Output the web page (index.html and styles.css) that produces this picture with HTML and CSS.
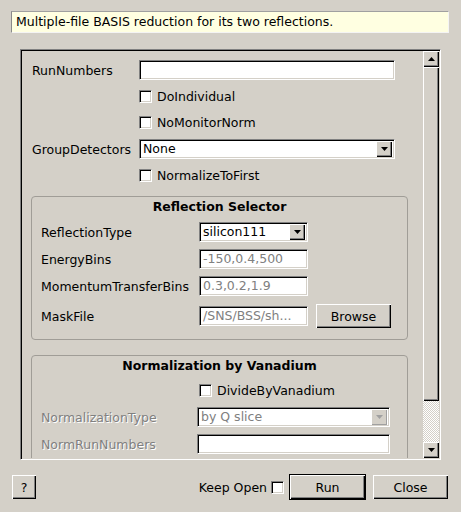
FILE: index.html
```html
<!DOCTYPE html>
<html>
<head>
<meta charset="utf-8">
<link rel="stylesheet" href="styles.css">
</head>
<body>
<div class="dialog">
  <div class="banner">Multiple-file BASIS reduction for its two reflections.</div>
  <div class="scroll">
    <div class="viewport">
      <div class="form">
        <div class="lbl">RunNumbers</div>
        <div class="field"><div class="input w256"></div></div>
        <div></div>
        <div class="field"><span class="check"></span><span class="cl">DoIndividual</span></div>
        <div></div>
        <div class="field"><span class="check"></span><span class="cl">NoMonitorNorm</span></div>
        <div class="lbl">GroupDetectors</div>
        <div class="field"><div class="combo w256"><span class="ctext">None</span><span class="cbtn"><svg width="7" height="4" viewBox="0 0 7 4"><polygon points="0,0 7,0 3.5,4" fill="#000"/></svg></span></div></div>
        <div></div>
        <div class="field"><span class="check"></span><span class="cl">NormalizeToFirst</span></div>
      </div>

      <div class="group g1">
        <div class="gtitle">Reflection Selector</div>
        <div class="grows">
          <div class="lbl">ReflectionType</div>
          <div class="field"><div class="combo w109"><span class="ctext">silicon111</span><span class="cbtn"><svg width="7" height="4" viewBox="0 0 7 4"><polygon points="0,0 7,0 3.5,4" fill="#000"/></svg></span></div></div>
          <div class="lbl">EnergyBins</div>
          <div class="field"><div class="input w109 ph">-150,0.4,500</div></div>
          <div class="lbl">MomentumTransferBins</div>
          <div class="field"><div class="input w109 ph">0.3,0.2,1.9</div></div>
          <div class="lbl last">MaskFile</div>
          <div class="field tall last"><div class="input w109 ph">/SNS/BSS/sh...</div><button class="btn browse">Browse</button></div>
        </div>
      </div>

      <div class="group g2">
        <div class="gtitle">Normalization by Vanadium</div>
        <div class="grows2">
          <div></div>
          <div class="field"><span class="check ml2"></span><span class="cl">DivideByVanadium</span></div>
          <div class="lbl dis">NormalizationType</div>
          <div class="field"><div class="combo w193 disabled"><span class="ctext ph">by Q slice</span><span class="cbtn"><svg width="7" height="4" viewBox="0 0 7 4"><polygon points="0,0 7,0 3.5,4" fill="#a0a0a0"/></svg></span></div></div>
          <div class="lbl dis">NormRunNumbers</div>
          <div class="field"><div class="input w193"></div></div>
        </div>
      </div>
    </div>
    <div class="vscroll">
      <div class="sbbtn"><svg width="7" height="4" viewBox="0 0 7 4"><polygon points="3.5,0 7,4 0,4" fill="#000"/></svg></div>
      <div class="thumb"></div>
      <div class="track"></div>
      <div class="sbbtn"><svg width="7" height="4" viewBox="0 0 7 4"><polygon points="0,0 7,0 3.5,4" fill="#000"/></svg></div>
    </div>
  </div>
  <div class="footer">
    <button class="btn help">?</button>
    <div class="spacer"></div>
    <span class="keep">Keep Open</span>
    <span class="check keepbox"></span>
    <button class="btn run">Run</button>
    <button class="btn close">Close</button>
  </div>
</div>
</body>
</html>
```

FILE: styles.css
```css
html, body {
  margin: 0;
  padding: 0;
}
body {
  width: 461px;
  height: 512px;
  overflow: hidden;
  background: #d4d0c8;
  font-family: "DejaVu Sans", sans-serif;
  font-size: 12.5px;
  color: #000;
}
.dialog {
  display: flex;
  flex-direction: column;
  height: 512px;
}
.banner {
  margin: 11px 12px 0 11px;
  height: 22px;
  box-sizing: border-box;
  background: #ffffe1;
  border: 1px solid;
  border-color: #a0a0a0 #f4f4f4 #f4f4f4 #8a8a8a;
  padding-left: 4px;
  line-height: 20px;
  white-space: nowrap;
}
.scroll {
  margin: 16px 20px 0 20px;
  height: 411px;
  box-sizing: border-box;
  border: 1px solid;
  border-color: #808080 #fff #fff #808080;
  box-shadow: inset 1px 1px 0 #000, inset -1px -1px 0 #d4d0c8;
  padding: 1px;
  display: flex;
}
.viewport {
  flex: 1;
  overflow: hidden;
  position: relative;
}
.vscroll {
  width: 16px;
  display: flex;
  flex-direction: column;
}
.sbbtn, .thumb, .btn, .cbtn {
  background: #d4d0c8;
  box-shadow: inset 1px 1px 0 #fff, inset -1px -1px 0 #000, inset -2px -2px 0 #808080;
}
.sbbtn {
  height: 16px;
  display: flex;
  align-items: center;
  justify-content: center;
}
.thumb {
  height: 334px;
}
.track {
  flex: 1;
  background: repeating-conic-gradient(#ffffff 0 25%, #d4d0c8 0 50%);
  background-size: 2px 2px;
}

/* form */
.form {
  display: grid;
  grid-template-columns: 107px 256px;
  grid-template-rows: 20px 20px 21px 20px 20px;
  row-gap: 6px;
  align-items: center;
  padding: 9px 0 0 10px;
}
.lbl {
  white-space: nowrap;
}
.lbl.dis {
  color: #808080;
  text-shadow: 1px 1px 0 #fff;
}
.field {
  display: flex;
  align-items: center;
  height: 20px;
}
.field.tall {
  height: 24px;
}
.last {
  margin-top: 1px;
}
.input, .combo {
  height: 20px;
  box-sizing: border-box;
  background: #fff;
  border: 1px solid;
  border-color: #808080 #fff #fff #808080;
  box-shadow: inset 1px 1px 0 #000, inset -1px -1px 0 #d4d0c8;
  padding: 0 3px;
  line-height: 18px;
  white-space: nowrap;
  overflow: hidden;
}
.ph {
  color: #808080;
}
.w256 { width: 256px; }
.w109 { width: 109px; }
.w193 { width: 193px; }
.combo {
  display: flex;
  padding: 1px 2px 1px 3px;
}
.ctext {
  flex: 1;
  line-height: 16px;
  overflow: hidden;
}
.cbtn {
  width: 16px;
  height: 16px;
  display: flex;
  align-items: center;
  justify-content: center;
}
.combo.disabled .cbtn {
  box-shadow: inset 1px 1px 0 #fff, inset -1px -1px 0 #a0a0a0;
}
.check {
  width: 13px;
  height: 13px;
  box-sizing: border-box;
  background: #fff;
  border: 1px solid;
  border-color: #808080 #fff #fff #808080;
  box-shadow: inset 1px 1px 0 #000, inset -1px -1px 0 #d4d0c8;
  flex: none;
}
.ml2 { margin-left: 2px; }
.cl {
  margin-left: 5px;
  white-space: nowrap;
}

/* groups */
.group {
  margin-left: 9px;
  width: 377px;
  box-sizing: border-box;
  border: 1px solid #a09d97;
  border-radius: 4px;
  padding-top: 2px;
}
.g1 {
  margin-top: 11px;
  padding-bottom: 11px;
}
.g2 {
  margin-top: 15px;
  padding-bottom: 20px;
}
.gtitle {
  font-weight: bold;
  text-align: center;
  line-height: 16px;
  height: 16px;
}
.grows {
  display: grid;
  grid-template-columns: 158px auto;
  row-gap: 7px;
  align-items: center;
  padding: 7px 0 0 9px;
}
.grows2 {
  display: grid;
  grid-template-columns: 156px auto;
  row-gap: 7px;
  align-items: center;
  padding: 6px 0 0 9px;
}
.btn {
  border: none;
  margin: 0;
  padding: 0;
  font-family: "DejaVu Sans", sans-serif;
  font-size: 12.5px;
  color: #000;
}
.browse {
  width: 75px;
  height: 24px;
  margin-left: 8px;
}

/* footer */
.footer {
  display: flex;
  align-items: center;
  margin-top: 14px;
  height: 26px;
  padding: 0 13px 0 12px;
}
.spacer { flex: 1; }
.help {
  width: 24px;
  height: 24px;
}
.keep {
  white-space: nowrap;
}
.keepbox {
  margin-left: 4px;
}
.run {
  margin-left: 5px;
  width: 77px;
  height: 26px;
  border: 1px solid #000;
}
.close {
  margin-left: 7px;
  width: 75px;
  height: 24px;
}
```
